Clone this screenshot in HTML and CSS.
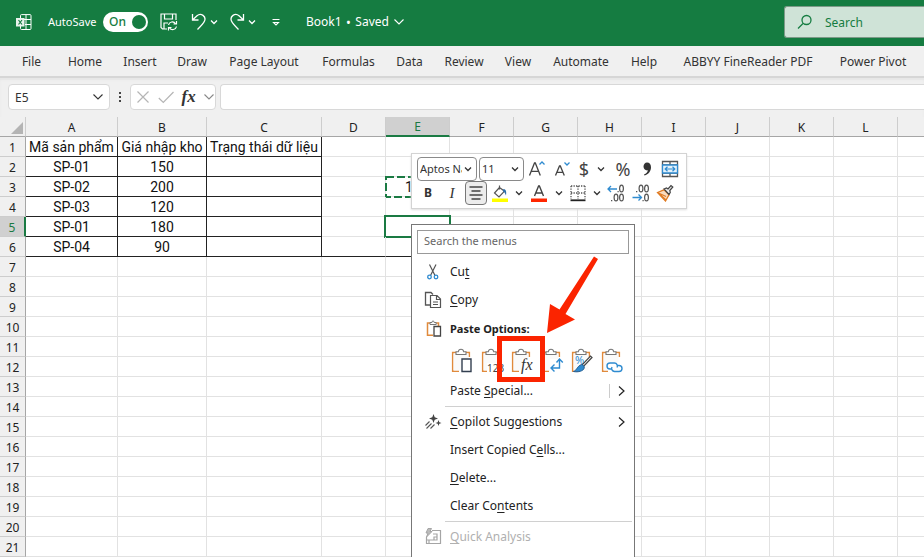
FILE: index.html
```html
<!DOCTYPE html>
<html lang="en">
<head>
<meta charset="utf-8">
<title>Book1</title>
<link rel="stylesheet" href="styles.css">
</head>
<body>
<svg class="sprite" aria-hidden="true">
  <symbol id="chev" viewBox="0 0 12 12"><path d="M3 4.500 6 7.500l3-3" fill="none" stroke="currentColor" stroke-width="1.300"/></symbol>
  <symbol id="chev-wide" viewBox="0 0 12 12"><path d="M1.500 3.500 6 8l4.500-4.500" fill="none" stroke="currentColor" stroke-width="1.100"/></symbol>
  <symbol id="chev-right" viewBox="0 0 12 12"><path d="M3 1.500 8 6l-5 4.500" fill="none" stroke="currentColor" stroke-width="1.200"/></symbol>
  <symbol id="board" viewBox="0 0 24 26">
    <path d="M7 4.500H2.700v18.800H9M15 4.500h4.300V9" fill="none" stroke="#e08a3c" stroke-width="1.600"/>
    <path d="M3.500 5.500h15v17h-15z" fill="#fafafa"/>
    <path d="M6 6.500V3.800h2.300C8.500 2 9.500 1.200 11 1.200s2.500.8 2.700 2.600H16v2.700z" fill="#fff" stroke="#777" stroke-width="1.100"/>
  </symbol>
</svg>

<header class="titlebar">
  <svg class="ico xl" viewBox="0 0 16 16"><path d="M4.500 4V1.500Q4.500.6 5.500.6H14q1 0 1 1v13q0 .9-1 .9H5.500q-1 0-1-1V12M10 .6v15M4.500 5.500H15M9 10.500h6" fill="none" stroke="#fff" stroke-width="1"/><path d="M0 4h8.500v8.500H0z" fill="#e9f3ed"/><path d="m2.500 6 3.500 4.500M6 6l-3.500 4.500" stroke="#157c41" stroke-width="1.200"/></svg>
  <span class="autosave">AutoSave</span>
  <button class="toggle" aria-label="AutoSave on"><span>On</span><i></i></button>
  <button class="tb save" aria-label="Save"><svg viewBox="0 0 18 18"><path d="M7 16H2.500L1 14.500V1h15v6M4.500 1v5h8V1M4 16v-6h4" fill="none" stroke="currentColor" stroke-width="1.200"/><path d="M8.500 12a3.800 3.800 0 0 1 7-1.200M16.500 8v3h-3M16.500 13.500a3.800 3.800 0 0 1-7 1.200M8.500 17.500v-3h3" fill="none" stroke="currentColor" stroke-width="1.200"/></svg></button>
  <button class="tb undo" aria-label="Undo"><svg viewBox="0 0 18 18"><path d="M2.500 1v6h6M2.500 7 7 2.700c4-3.400 9.500.8 7.500 5.300C13.500 10.500 11 13 7.500 16.500" fill="none" stroke="currentColor" stroke-width="1.300"/></svg><svg class="sm"><use href="#chev"/></svg></button>
  <button class="tb redo" aria-label="Redo"><svg viewBox="0 0 18 18"><path d="M15.500 1v6h-6M15.500 7 11 2.700C7 -.7 1.500 3.500 3.500 8c1 2.500 3.500 5 7 8.500" fill="none" stroke="currentColor" stroke-width="1.300"/></svg><svg class="sm"><use href="#chev"/></svg></button>
  <button class="tb more" aria-label="Customize toolbar"><svg class="sm" viewBox="0 0 12 12"><path d="M2.500 3.500h7M3.500 6.500h5L6 9z" fill="none" stroke="currentColor" stroke-width="1.100"/></svg></button>
  <button class="doc">Book1<b>•</b>Saved<svg class="sm"><use href="#chev-wide"/></svg></button>
  <label class="search"><svg viewBox="0 0 16 16"><circle cx="9.500" cy="6" r="4.500" fill="none" stroke="currentColor" stroke-width="1.300"/><path d="M6 9.500 1 14.500" stroke="currentColor" stroke-width="1.300"/></svg><input type="text" placeholder="Search" aria-label="Search"></label>
</header>

<nav class="tabs">
  <button>File</button><button>Home</button><button>Insert</button><button>Draw</button><button>Page Layout</button><button>Formulas</button><button>Data</button><button>Review</button><button>View</button><button>Automate</button><button>Help</button><button>ABBYY FineReader PDF</button><button>Power Pivot</button>
</nav>

<section class="formula">
  <div class="box name"><input type="text" value="E5" aria-label="Name box"><svg class="sm"><use href="#chev-wide"/></svg></div>
  <svg class="dots" viewBox="0 0 4 12"><path d="M1 1h2v2H1zM1 5h2v2H1zM1 9h2v2H1z" fill="#444"/></svg>
  <div class="box fx">
    <button aria-label="Cancel"><svg viewBox="0 0 16 16"><path d="m2.500 2.500 11 11m0-11-11 11" stroke="#b5b5b5" stroke-width="1.200"/></svg></button>
    <button aria-label="Enter"><svg viewBox="0 0 16 16"><path d="m.8 9 4.500 4.500L15.500 3" fill="none" stroke="#b5b5b5" stroke-width="1.200"/></svg></button>
    <button class="fxb">fx</button>
    <svg class="sm grey"><use href="#chev-wide"/></svg>
  </div>
  <input class="box bar" type="text" aria-label="Formula bar">
</section>

<main class="sheet">
<table>
<colgroup><col class="c0"><col class="ca"><col class="cb"><col class="cc"><col span="9" class="cn"><col class="cn"></colgroup>
<thead><tr><th class="corner"><svg viewBox="0 0 12 12"><path d="M12 0v12H0z" fill="#b4b4b4"/></svg></th><th>A</th><th>B</th><th>C</th><th>D</th><th class="on">E</th><th>F</th><th>G</th><th>H</th><th>I</th><th>J</th><th>K</th><th>L</th><th></th></tr></thead>
<tbody>
<tr><th>1</th><td class="k">Mã sản phẩm</td><td class="k">Giá nhập kho</td><td class="k">Trạng thái dữ liệu</td><td></td><td></td><td></td><td></td><td></td><td></td><td></td><td></td><td></td><td></td></tr>
<tr><th>2</th><td class="k">SP-01</td><td class="k">150</td><td class="k"></td><td></td><td></td><td></td><td></td><td></td><td></td><td></td><td></td><td></td><td></td></tr>
<tr><th>3</th><td class="k">SP-02</td><td class="k">200</td><td class="k"></td><td></td><td class="copied">1<svg><rect x="1" y="1" width="64" height="20" fill="none" stroke="#1a7a43" stroke-width="2" stroke-dasharray="8 3"/></svg></td><td></td><td></td><td></td><td></td><td></td><td></td><td></td><td></td></tr>
<tr><th>4</th><td class="k">SP-03</td><td class="k">120</td><td class="k"></td><td></td><td></td><td></td><td></td><td></td><td></td><td></td><td></td><td></td><td></td></tr>
<tr><th class="on">5</th><td class="k">SP-01</td><td class="k">180</td><td class="k"></td><td></td><td class="sel"></td><td></td><td></td><td></td><td></td><td></td><td></td><td></td><td></td></tr>
<tr><th>6</th><td class="k">SP-04</td><td class="k">90</td><td class="k"></td><td class="under"></td><td class="under"></td><td></td><td></td><td></td><td></td><td></td><td></td><td></td><td></td></tr>
<tr><th>7</th><td></td><td></td><td></td><td></td><td></td><td></td><td></td><td></td><td></td><td></td><td></td><td></td><td></td></tr>
<tr><th>8</th><td></td><td></td><td></td><td></td><td></td><td></td><td></td><td></td><td></td><td></td><td></td><td></td><td></td></tr>
<tr><th>9</th><td></td><td></td><td></td><td></td><td></td><td></td><td></td><td></td><td></td><td></td><td></td><td></td><td></td></tr>
<tr><th>10</th><td></td><td></td><td></td><td></td><td></td><td></td><td></td><td></td><td></td><td></td><td></td><td></td><td></td></tr>
<tr><th>11</th><td></td><td></td><td></td><td></td><td></td><td></td><td></td><td></td><td></td><td></td><td></td><td></td><td></td></tr>
<tr><th>12</th><td></td><td></td><td></td><td></td><td></td><td></td><td></td><td></td><td></td><td></td><td></td><td></td><td></td></tr>
<tr><th>13</th><td></td><td></td><td></td><td></td><td></td><td></td><td></td><td></td><td></td><td></td><td></td><td></td><td></td></tr>
<tr><th>14</th><td></td><td></td><td></td><td></td><td></td><td></td><td></td><td></td><td></td><td></td><td></td><td></td><td></td></tr>
<tr><th>15</th><td></td><td></td><td></td><td></td><td></td><td></td><td></td><td></td><td></td><td></td><td></td><td></td><td></td></tr>
<tr><th>16</th><td></td><td></td><td></td><td></td><td></td><td></td><td></td><td></td><td></td><td></td><td></td><td></td><td></td></tr>
<tr><th>17</th><td></td><td></td><td></td><td></td><td></td><td></td><td></td><td></td><td></td><td></td><td></td><td></td><td></td></tr>
<tr><th>18</th><td></td><td></td><td></td><td></td><td></td><td></td><td></td><td></td><td></td><td></td><td></td><td></td><td></td></tr>
<tr><th>19</th><td></td><td></td><td></td><td></td><td></td><td></td><td></td><td></td><td></td><td></td><td></td><td></td><td></td></tr>
<tr><th>20</th><td></td><td></td><td></td><td></td><td></td><td></td><td></td><td></td><td></td><td></td><td></td><td></td><td></td></tr>
<tr><th>21</th><td></td><td></td><td></td><td></td><td></td><td></td><td></td><td></td><td></td><td></td><td></td><td></td><td></td></tr>
</tbody>
</table>
</main>

<div class="mini" role="toolbar" aria-label="Formatting">
  <div class="mrow">
    <div class="pick font"><select aria-label="Font"><option>Aptos Narrow</option></select><svg class="sm"><use href="#chev"/></svg></div>
    <div class="pick size"><select aria-label="Font size"><option>11</option></select><svg class="sm"><use href="#chev"/></svg></div>
    <button class="w26" aria-label="Increase font size"><svg viewBox="0 0 18 18"><path d="M1.500 15.500 6.500 3h.8l5 12.500M3.200 11.300h7.400" fill="none" stroke="#444" stroke-width="1.300"/><path d="m11.500 4.500 2.500-2.500 2.500 2.500" fill="none" stroke="#2f8bd0" stroke-width="1.300"/></svg></button>
    <button class="w24" aria-label="Decrease font size"><svg viewBox="0 0 18 18"><path d="M2.500 15.500 6.500 6h.8l4 9.500M4 12.300h5.800" fill="none" stroke="#444" stroke-width="1.300"/><path d="M11.500 2.500 14 5l2.500-2.500" fill="none" stroke="#2f8bd0" stroke-width="1.300"/></svg></button>
    <button class="w20 glyph">$</button>
    <button class="w14" aria-label="Currency formats"><svg class="sm"><use href="#chev"/></svg></button>
    <button class="w30 glyph">%</button>
    <button class="w18" aria-label="Comma style"><svg viewBox="0 0 18 18"><path d="M9 2.500c2.500 0 4 1.800 4 4.700 0 4-2.500 7-6.500 8.300l-.5-1c2.300-1 3.600-2.400 3.900-4.200C7.500 10.800 5.500 9 5.500 6.500c0-2.300 1.500-4 3.500-4z" fill="#333"/></svg></button>
    <button class="w28" aria-label="Merge and center"><svg viewBox="0 0 18 18"><path d="M1.500 1.500h15v15h-15zM1.500 5h15M1.500 13h15M9 1.500V5M9 13v3.500" fill="none" stroke="#555" stroke-width="1.300"/><path d="M1.500 5h15v8h-15z" fill="#e3f1fb" stroke="#2f8bd0" stroke-width="1.300"/><path d="M4.500 9h9M6.500 6.800 4.200 9l2.300 2.200M11.500 6.800 13.800 9l-2.300 2.200" fill="none" stroke="#2f8bd0" stroke-width="1.200"/></svg></button>
  </div>
  <div class="mrow">
    <button class="w22 bold">B</button>
    <button class="w26 ital">I</button>
    <button class="w22 pressed" aria-label="Center"><svg viewBox="0 0 18 18"><path d="M2.500 3h13M4.500 7h9M2.500 11h13M4.500 15h9" stroke="#444" stroke-width="1.300"/></svg></button>
    <button class="w26" aria-label="Fill color"><svg viewBox="0 0 18 18"><path d="M8.500 1.500v4M8.500 3.500 3.500 9l4.500 4 5.500-5.800z" fill="#fff" stroke="#555" stroke-width="1.200"/><path d="M12 5.500c2.500-1 3.800 1.500 3 6-1-2.500-1.500-3.500-3-4z" fill="#2f6fa8"/><path d="M1 14.500h16v3.500H1z" fill="#ffff00"/></svg></button>
    <button class="w12" aria-label="Fill colors"><svg class="sm"><use href="#chev"/></svg></button>
    <button class="w28" aria-label="Font color"><svg viewBox="0 0 18 18"><path d="M4.500 12 8.600 2h.8l4.100 10M6 9h6" fill="none" stroke="#444" stroke-width="1.400"/><path d="M1 14.500h16v3.500H1z" fill="#ff2600"/></svg></button>
    <button class="w12" aria-label="Font colors"><svg class="sm"><use href="#chev"/></svg></button>
    <button class="w26" aria-label="Bottom border"><svg viewBox="0 0 18 18"><path d="M2 2h14M2 9h14M2 2v13M9 2v13M16 2v13" fill="none" stroke="#555" stroke-width="1.300" stroke-dasharray="1.300 1.200"/><path d="M1.500 16.300h15" stroke="#222" stroke-width="1.800"/></svg></button>
    <button class="w12" aria-label="Borders"><svg class="sm"><use href="#chev"/></svg></button>
    <button class="w26" aria-label="Increase decimal"><svg viewBox="0 0 18 18"><path d="M1 5h9M4 2 1 5l3 3" fill="none" stroke="#2f8bd0" stroke-width="1.300"/><g fill="none" stroke="#555" stroke-width="1.200"><ellipse cx="14.500" cy="4.500" rx="1.900" ry="3.400"/><ellipse cx="9" cy="13.500" rx="1.900" ry="3.400"/><ellipse cx="14.500" cy="13.500" rx="1.900" ry="3.400"/></g><path d="M4 16h1.300v1.300H4zM10.500 7h1.200v1.200h-1.200z" fill="#555"/></svg></button>
    <button class="w24" aria-label="Decrease decimal"><svg viewBox="0 0 18 18"><path d="M.5 13.500h9M6.500 10.500l3 3-3 3" fill="none" stroke="#2f8bd0" stroke-width="1.300"/><g fill="none" stroke="#555" stroke-width="1.200"><ellipse cx="9" cy="4.500" rx="1.900" ry="3.400"/><ellipse cx="14.500" cy="4.500" rx="1.900" ry="3.400"/><ellipse cx="14.500" cy="13.500" rx="1.900" ry="3.400"/></g><path d="M4 7h1.300v1.300H4zM10.500 16h1.200v1.300h-1.200z" fill="#555"/></svg></button>
    <button class="w24" aria-label="Format painter"><svg viewBox="0 0 18 18"><path d="M1.500 8.500 8 5.800l5 5L9.500 17z" fill="#f9dcc0" stroke="#e07c24" stroke-width="1.300"/><path d="M4 10.500 10 16M2 8.800l8 3.700" stroke="#e07c24" stroke-width="1.200"/><path d="m8 5 2.500-1 1.500 1 3-3.500 1.800 1.500-3 3.500.5 2-1.300 2z" fill="#eee" stroke="#444" stroke-width="1.200"/></svg></button>
  </div>
</div>

<div class="menu" role="menu">
  <input class="find" type="text" placeholder="Search the menus" aria-label="Search the menus">
  <button class="item"><svg class="mi" viewBox="0 0 18 18"><path d="m5.500 1.500 5.500 11M12 1.500 6.500 12.500" stroke="#555" stroke-width="1.200"/><circle cx="5.500" cy="14" r="1.800" fill="none" stroke="#2f8bd0" stroke-width="1.300"/><circle cx="12" cy="14" r="1.800" fill="none" stroke="#2f8bd0" stroke-width="1.300"/></svg><span>Cu<u>t</u></span></button>
  <button class="item"><svg class="mi" viewBox="0 0 18 18"><path d="M6.500 14H1.500V1.500H7L9 3.500" fill="none" stroke="#555" stroke-width="1.300"/><path d="M6.500 4.500H13l3.500 3.500v8.500h-10zM12.500 4.500v4h4M9 11h5M9 13.500h5" fill="#fff" stroke="#555" stroke-width="1.200"/></svg><span><u>C</u>opy</span></button>
  <div class="item head"><svg class="mi" viewBox="0 0 18 18"><path d="M6 3H3.500v12.300H9M12 3h2.500v3" fill="none" stroke="#e08a3c" stroke-width="1.500"/><path d="M6 4.500v-2h2Q8.300.7 9 .7t1.200 1.800h2v2z" fill="#fff" stroke="#777"/><path d="M10 6.500h6.500v9.500H10z" fill="#fff" stroke="#444" stroke-width="1.300"/></svg><span>Paste Options:</span></div>
  <div class="paste">
    <button aria-label="Paste"><svg viewBox="0 0 24 26"><use href="#board"/><path d="M12 11h9v12.500h-9z" fill="#fff" stroke="#333f50" stroke-width="1.400"/></svg></button>
    <button aria-label="Values"><svg viewBox="0 0 24 26"><use href="#board"/><path d="M7 15h16v10H7z" fill="#fff"/><text x="7" y="24" font-size="10" fill="#444">123</text></svg></button>
    <button class="target" aria-label="Formulas"><svg viewBox="0 0 24 26"><use href="#board"/><path d="M12 11h11v13H12z" fill="#fff"/><text class="fxt" x="11" y="22" font-size="16" fill="#333">fx</text></svg></button>
    <button aria-label="Transpose"><svg viewBox="0 0 24 26"><use href="#board"/><path d="M10 11h12v14H10z" fill="#fff"/><path d="M19.500 12V20H11M16.500 14.500l3-3.500 3.300 3.500M14.500 16.500 11 20l3.500 3.500" fill="none" stroke="#2f8bd0" stroke-width="1.400"/></svg></button>
    <button aria-label="Formatting"><svg viewBox="0 0 24 26"><use href="#board"/><text x="5" y="16" font-size="11" fill="#2f8bd0">%</text><path d="M22 9.500 13 19l-1.500-1.500L20.500 8z" fill="#fff" stroke="#444" stroke-width="1.200"/><path d="M11.500 16.500c2 .5 3 1.800 2.700 3.500-.7 3-6 4.500-10.700 3.500 3.500-1 3-5 8-7z" fill="#2f8bd0" stroke="#245e92"/></svg></button>
    <button aria-label="Paste link"><svg viewBox="0 0 24 26"><use href="#board"/><path d="M8 14h14v11H8z" fill="#fff"/><path d="M12 21h-2a3 3 0 0 1 0-6h4.500a3 3 0 0 1 2.500 4.500M17 17.500h2a3 3 0 0 1 0 6h-4.500A3 3 0 0 1 12 19" fill="none" stroke="#2f8bd0" stroke-width="1.400"/></svg></button>
  </div>
  <button class="item"><i></i><span>Paste <u>S</u>pecial...</span><em></em><svg class="sm"><use href="#chev-right"/></svg></button>
  <hr>
  <button class="item"><svg class="mi" viewBox="0 0 18 18"><path d="m9.500 1 1.200 3.300L14 5.500l-3.300 1.200L9.500 10 8.300 6.700 5 5.500l3.300-1.200zM14.500 7l.8 2.200 2.200.8-2.200.8-.8 2.200-.8-2.200-2.200-.8 2.200-.8z" fill="#444"/><path d="m5.500 8.500-4 4M7.500 10.500l-5 5M10.500 11.500l-4 4" stroke="#555" stroke-width="1.100"/></svg><span><u>C</u>opilot Suggestions</span><svg class="sm"><use href="#chev-right"/></svg></button>
  <button class="item"><i></i><span>Insert Copied C<u>e</u>lls...</span></button>
  <button class="item"><i></i><span><u>D</u>elete...</span></button>
  <button class="item"><i></i><span>Clear Co<u>n</u>tents</span></button>
  <hr>
  <button class="item" disabled><svg class="mi" viewBox="0 0 18 18"><path d="M8 2.500h8.500v13h-14V9M2.500 12H13V6H9M5 12v3.500M10 12V9h3" fill="none" stroke="#a5a5a5" stroke-width="1.200"/><path d="M4 .5h3.500L6 3.500h2L2.500 9 4 5H2z" fill="#bbb" stroke="#a5a5a5"/></svg><span><u>Q</u>uick Analysis</span></button>
</div>

<svg class="callout" viewBox="0 0 102 128" aria-hidden="true">
  <path d="M2.500 82.500h43v41h-43z" fill="none" stroke="#fb2400" stroke-width="5"/>
  <path d="m97 .5 4 2.500L68.500 58l9.500 5.500L50 77l3-29 9.500 5.500z" fill="#fb2400"/>
</svg>
</body>
</html>
```
FILE: styles.css
```css
* { box-sizing: border-box; }
body {
  margin: 0;
  height: 100vh;
  overflow: hidden;
  position: relative;
  display: flex;
  flex-direction: column;
  background: #f0f0f0;
  color: #333;
  font: 12px/16px "Noto Sans", "Open Sans", sans-serif;
}
button { border: 0; padding: 0; background: none; color: inherit; font: inherit; display: flex; align-items: center; justify-content: center; white-space: nowrap; }
input, select { font: inherit; color: inherit; min-width: 0; outline: 0; }
svg { display: block; flex: none; }
.sprite { position: absolute; width: 0; height: 0; }
.sm { width: 12px; height: 12px; }

.titlebar { height: 46px; flex: none; display: flex; align-items: center; background: #157c41; color: #fff; font-size: 11px; padding: 0 0 2px 16px; }
.xl { width: 16px; height: 16px; }
.autosave { width: 55px; margin-left: 16px; white-space: nowrap; }
.toggle { width: 45px; height: 20px; border-radius: 10px; background: #fff; color: #157c41; justify-content: space-between; padding: 0 2px 0 6px; font-weight: 500; font-size: 12px; }
.toggle i { width: 14px; height: 14px; border-radius: 50%; background: #157c41; }
.tb svg:first-child:not(.sm) { width: 18px; height: 18px; }
.save { margin-left: 12px; }
.undo { margin-left: 12px; }
.redo { margin-left: 8px; }
.more { margin-left: 12px; }
.doc { margin-left: 24px; font-size: 12px; }
.doc b { margin: 0 5px; font-size: 10px; }
.doc svg { margin-left: 4px; }
.search { margin-left: auto; width: 140px; height: 32px; display: flex; align-items: center; gap: 12px; padding-left: 12px; background: #cfe3d7; border: 1px solid #7d9a88; border-right: 0; border-radius: 3px 0 0 3px; color: #157c41; }
.search svg { width: 16px; height: 16px; }
.search input { flex: 1; border: 0; padding: 2px 0 0; background: none; font-size: 12px; }
.search input::placeholder { color: #157c41; }

.tabs { flex: none; height: 32px; display: grid; grid-template-columns: 43px 64px 46px 58px 86px 83px 39px 70px 38px 88px 38px 170px 80px; padding: 2px 0 0 10px; border-bottom: 2px solid #d6d6d6; }

.formula { flex: none; height: 39px; padding: 6px 0 7px 8px; display: flex; align-items: center; box-shadow: inset 0 2px 2px #e6e6e6; }
.box { height: 26px; background: #fff; border: 1px solid #d8d8d8; border-radius: 4px; display: flex; align-items: center; }
.name { width: 102px; padding: 0 5px 0 6px; }
.name input { flex: 1; border: 0; padding: 2px 0 0; background: none; }
.dots { width: 4px; height: 12px; margin: 0 8px; }
.fx { width: 86px; justify-content: space-between; padding: 0 0 0 4px; }
.fx button svg { width: 16px; height: 16px; }
.fxb { font: italic bold 17px/20px "Liberation Serif", serif; color: #333; }
.grey { color: #888; }
.bar { flex: 1; margin-left: 4px; border-right: 0; border-radius: 4px 0 0 4px; padding: 0 8px; }

.sheet { flex: 1; min-height: 0; overflow: hidden; background: #fff; }
table { border-collapse: separate; border-spacing: 0; table-layout: fixed; width: 962px; }
.c0 { width: 26px; } .ca { width: 92px; } .cb { width: 89px; } .cc { width: 115px; } .cn { width: 64px; }
th, td { height: 20px; padding: 2px 0 0; text-align: center; white-space: nowrap; border: 0 solid #e2e2e2; border-width: 0 1px 1px 0; line-height: 17px; }
th { background: #f0f0f0; font-weight: 400; color: #222; border-color: #cdcdcd; }
thead th { border-bottom-color: #a6a6a6; }
tbody th { border-right-color: #a6a6a6; }
.corner svg { width: 12px; height: 12px; margin: 1px 0 0 11px; }
th.on { background: #d0d0d0; color: #1a7a43; }
thead th.on { border-bottom: 2px solid #1a7a43; line-height: 16px; }
tbody th.on { border-right: 2px solid #1a7a43; }
td { font-family: Roboto, "Noto Sans", sans-serif; font-size: 14px; color: #111; position: relative; }
td.k { border-color: #222; }
td.under { border-bottom: 1px solid #222; }
td.copied { text-align: left; padding-left: 19px; }
.copied svg { position: absolute; left: -1px; top: -1px; width: 66px; height: 22px; }
.sel::after { content: ""; position: absolute; inset: -2px; border: 2px solid #1a7a43; }

.mini { position: absolute; left: 411px; top: 153px; width: 276px; height: 56px; padding: 3px 1px 3px 5px; background: #fff; border: 1px solid #d3d3d3; box-shadow: 0 1px 2px #ddd; }
.mrow { display: flex; align-items: center; height: 24px; }
.mrow button { height: 24px; flex: none; }
.mrow svg { width: 18px; height: 18px; }
.mrow .sm { width: 12px; height: 12px; }
.pick { flex: none; display: grid; grid-template-columns: 1fr 14px; align-items: center; height: 24px; border: 1px solid #8a8a8a; border-radius: 4px; background: #fff; }
.pick select { grid-area: 1 / 1; appearance: none; border: 0; padding: 0 0 0 2px; background: none; width: 100%; font-size: 11px; text-overflow: clip; }
.font { width: 60px; margin-right: 2px; } .size { width: 45px; }
.glyph { font-size: 18px; color: #444; }
.bold { font-weight: 700; }
.ital { font: italic 15px/20px "Liberation Serif", serif; }
.pressed { background: #ececec; border: 1px solid #777; border-radius: 4px; }
.w12 { width: 12px; } .w14 { width: 14px; } .w18 { width: 18px; } .w20 { width: 20px; } .w22 { width: 22px; } .w24 { width: 24px; } .w26 { width: 26px; } .w28 { width: 28px; } .w30 { width: 30px; }

.menu { position: absolute; left: 411px; top: 224px; width: 224px; padding: 5px 2px 12px 5px; background: #fff; border: 1px solid #777; color: #222; }
.find { display: block; width: 212px; height: 24px; margin-bottom: 4px; border: 1px solid #999; padding: 0 6px 4px; background: #fff; font-size: 11px; }
.find::placeholder { color: #666; }
.item { width: 100%; height: 28px; display: flex; align-items: center; justify-content: flex-start; padding: 0 4px 0 7px; text-align: left; }
.item .mi, .item i { width: 18px; height: 18px; flex: none; margin-right: 8px; }
.item span { flex: 1; }
.item u { text-underline-offset: 2px; }
.item em { width: 1px; height: 14px; background: #ccc; margin-right: 6px; }
.item:disabled { color: #b0b0b0; }
.head { height: 30px; font-weight: 700; font-size: 11px; }
.paste { display: flex; gap: 6px; height: 33px; padding-left: 33px; align-items: center; }
.paste svg { width: 24px; height: 26px; }
.paste text { font-family: "Noto Sans", sans-serif; }
.paste .fxt { font-family: "Liberation Serif", serif; font-style: italic; }
hr { height: 1px; margin: 1px 0 1px 28px; border: 0; background: #d0d0d0; }

.callout { position: absolute; left: 497px; top: 256px; width: 102px; height: 128px; pointer-events: none; }
```
